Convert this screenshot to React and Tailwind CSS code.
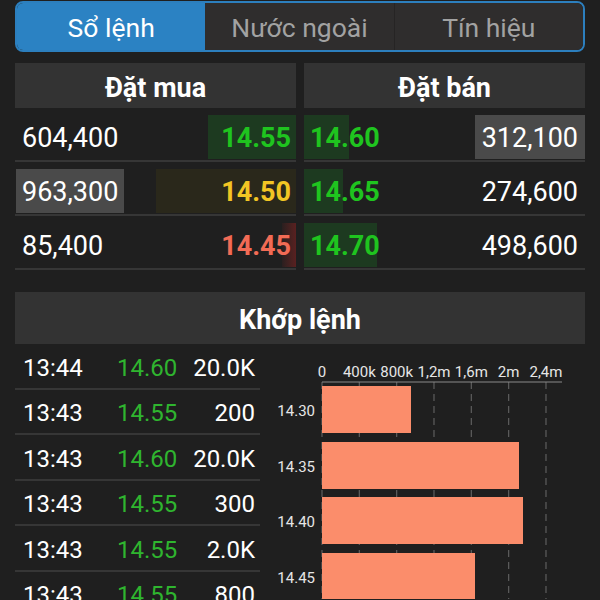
import React from "react";

const buy = [
  { vol: "604,400", price: "14.55", color: "text-[#1fc41f]", bar: 88, barColor: "bg-[#1d3a20]", hl: false },
  { vol: "963,300", price: "14.50", color: "text-[#f2c524]", bar: 140, barColor: "bg-[#2a281b]", hl: true },
  { vol: "85,400", price: "14.45", color: "text-[#f26b55]", bar: 14, barColor: "bg-gradient-to-r from-[#2a1f1f] to-[#5a2020]", hl: false },
];
const sell = [
  { vol: "312,100", price: "14.60", bar: 45, hl: true },
  { vol: "274,600", price: "14.65", bar: 39, hl: false },
  { vol: "498,600", price: "14.70", bar: 73, hl: false },
];
const trades = [
  ["13:44", "14.60", "20.0K"],
  ["13:43", "14.55", "200"],
  ["13:43", "14.60", "20.0K"],
  ["13:43", "14.55", "300"],
  ["13:43", "14.55", "2.0K"],
  ["13:43", "14.55", "800"],
];

function Chart() {
  const x0 = 62;
  const step = 37.33;
  const ticks = ["0", "400k", "800k", "1,2m", "1,6m", "2m", "2,4m"];
  const bars = [
    { label: "14.30", w: 89, y: 42 },
    { label: "14.35", w: 197, y: 98 },
    { label: "14.40", w: 201, y: 153 },
    { label: "14.45", w: 153, y: 209 },
  ];
  return (
    <svg width="325" height="255" viewBox="0 0 325 255" className="block">
      {ticks.map((t, i) => (
        <line key={"g" + i} x1={x0 + i * step} y1={38} x2={x0 + i * step} y2={255} stroke="#5e5e5e" strokeWidth="1.2" strokeDasharray="7 5" />
      ))}
      <line x1={x0} y1={38} x2={302} y2={38} stroke="#8a8a8a" strokeWidth="1" />
      {ticks.map((t, i) => (
        <text key={"t" + i} x={x0 + i * step} y={33} fill="#e6e6e6" fontSize="15" textAnchor="middle" fontFamily="Roboto, sans-serif">{t}</text>
      ))}
      {bars.map((b, i) => (
        <g key={"b" + i}>
          <rect x={x0} y={b.y} width={b.w} height={47} fill="#fb8d6b" />
          <text x={55} y={b.y + 30} fill="#e6e6e6" fontSize="15" textAnchor="end" fontFamily="Roboto, sans-serif">{b.label}</text>
        </g>
      ))}
    </svg>
  );
}

export default function App() {
  return (
    <div className="w-[600px] h-[600px] overflow-hidden bg-[#1f1f1f] px-[15px] pt-[1px] text-white font-['Roboto',sans-serif]">
      <div className="flex h-[51px] rounded-[8px] border-2 border-[#2c7fbe] overflow-hidden text-[26.5px]">
        <div className="flex-1 flex items-center justify-center pt-[2px] bg-[#2b82c3] text-white">Sổ lệnh</div>
        <div className="flex-1 flex items-center justify-center pt-[2px] bg-[#2f2d2d] text-[#a2a2a2]">Nước ngoài</div>
        <div className="flex-1 flex items-center justify-center pt-[2px] bg-[#2f2d2d] text-[#a2a2a2] border-l border-[#262424]">Tín hiệu</div>
      </div>

      <div className="mt-[11px] grid grid-cols-2 gap-x-[8px]">
        <div className="h-[45px] bg-[#333333] flex items-center justify-center pt-[6px] font-bold text-[27px]">Đặt mua</div>
        <div className="h-[45px] bg-[#333333] flex items-center justify-center pt-[6px] font-bold text-[27px]">Đặt bán</div>
        <div className="flex flex-col">
          {buy.map((r, i) => (
            <div key={i} className="h-[54px] border-b-2 border-[#363636] flex items-center justify-between pt-[6px]">
              <span className={"h-[44px] flex items-center pt-[3px] px-[6px] text-[27px] ml-[1px] " + (r.hl ? "bg-[#4a4a4a]" : "")}>{r.vol}</span>
              <span className="relative h-[44px] flex items-center pt-[3px] pr-[5px]">
                <span className={"absolute right-0 top-0 bottom-0 " + r.barColor} style={{ width: r.bar }} />
                <span className={"relative font-bold text-[27px] " + r.color}>{r.price}</span>
              </span>
            </div>
          ))}
        </div>
        <div className="flex flex-col">
          {sell.map((r, i) => (
            <div key={i} className="h-[54px] border-b-2 border-[#363636] flex items-center justify-between pt-[6px]">
              <span className="relative h-[44px] flex items-center pt-[3px] pl-[6px]">
                <span className="absolute left-0 top-0 bottom-0 bg-[#1d3a20]" style={{ width: r.bar }} />
                <span className="relative font-bold text-[27px] text-[#1fc41f]">{r.price}</span>
              </span>
              <span className={"h-[44px] flex items-center pt-[3px] px-[7px] text-[27px] " + (r.hl ? "bg-[#4a4a4a]" : "")}>{r.vol}</span>
            </div>
          ))}
        </div>
      </div>

      <div className="mt-[22px] h-[52px] bg-[#333333] flex items-center justify-center pt-[4px] font-bold text-[27px]">Khớp lệnh</div>

      <div className="flex">
        <div className="w-[245px] flex flex-col">
          {trades.map((t, i) => (
            <div key={i} className="h-[45.5px] shrink-0 border-b-2 border-[#363636] flex items-center pt-[4px] text-[24px]">
              <span className="w-[102px] pl-[8px]">{t[0]}</span>
              <span className="w-[60px] text-[#2fb52f]">{t[1]}</span>
              <span className="flex-1 text-right pr-[5px]">{t[2]}</span>
            </div>
          ))}
        </div>
        <div className="flex-1">
          <Chart />
        </div>
      </div>
    </div>
  );
}
